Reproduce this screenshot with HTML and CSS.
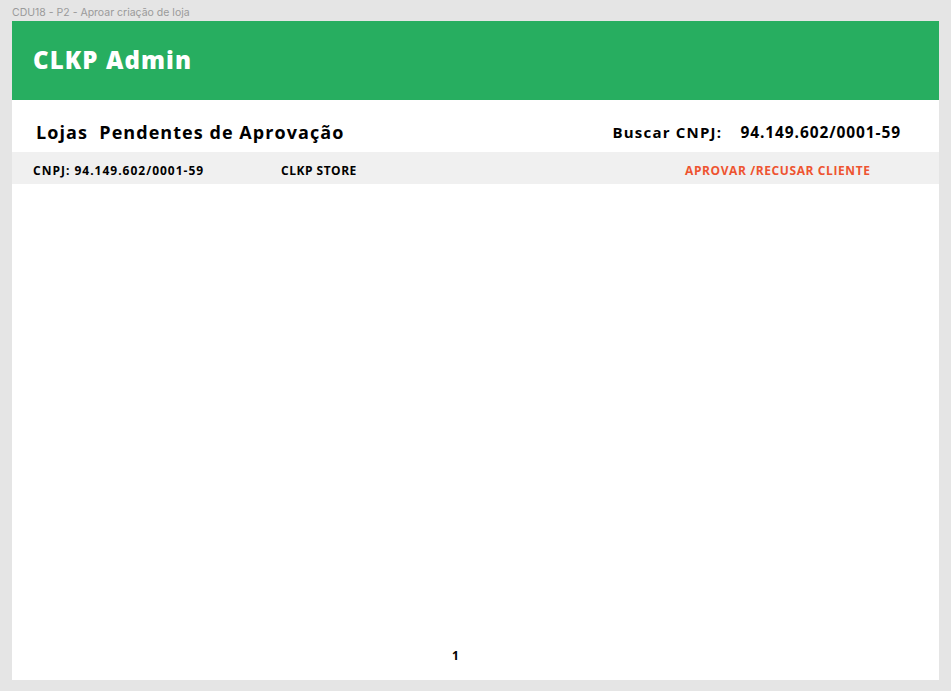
FILE: index.html
```html
<!DOCTYPE html>
<html lang="pt">
<head>
<meta charset="utf-8">
<link rel="stylesheet" href="styles.css">
</head>
<body>
<div class="label">CDU18 - P2 - Aproar criação de loja</div>
<div class="frame">
  <header class="topbar"><h1>CLKP Admin</h1></header>
  <div class="titlerow">
    <h2>Lojas&nbsp; Pendentes de Aprovação</h2>
    <div class="search"><span class="search-label">Buscar CNPJ:</span><span class="search-value">94.149.602/0001-59</span></div>
  </div>
  <div class="row">
    <span class="cnpj">CNPJ: 94.149.602/0001-59</span>
    <span class="name">CLKP STORE</span>
    <span class="action">APROVAR /RECUSAR CLIENTE</span>
  </div>
  <div class="spacer"></div>
  <div class="pager">1</div>
</div>
</body>
</html>
```
FILE: styles.css
```css
html, body { margin: 0; padding: 0; }
body {
  background: #e5e5e5;
  width: 951px;
  height: 691px;
  overflow: hidden;
  font-family: "Open Sans", sans-serif;
  color: #000;
}
.label {
  height: 21px;
  padding-left: 12px;
  font-family: Inter, sans-serif;
  font-size: 10.5px;
  line-height: 25px;
  color: #9a9a9a;
  box-sizing: border-box;
}
.frame {
  margin-left: 12px;
  width: 927px;
  height: 659px;
  background: #fff;
  display: flex;
  flex-direction: column;
}
.topbar {
  height: 79px;
  background: #27ae60;
  display: flex;
  align-items: center;
  padding-left: 21px;
}
.topbar h1 {
  margin: 0;
  color: #fff;
  font-size: 24px;
  font-weight: 800;
  letter-spacing: 1.1px;
  position: relative;
  top: -1px;
}
.titlerow {
  height: 52px;
  display: flex;
  align-items: center;
  padding: 12px 0 0 24px;
  box-sizing: border-box;
}
.titlerow h2 {
  margin: 0;
  font-size: 18px;
  font-weight: 700;
  letter-spacing: 1.05px;
  flex: 1;
}
.search {
  display: flex;
  align-items: center;
  font-weight: 700;
  margin-right: 38px;
}
.search-label { font-size: 15px; width: 128px; letter-spacing: 1.2px; }
.search-value { font-size: 15.5px; letter-spacing: 0.9px; }
.row {
  height: 32px;
  background: #f0f0f0;
  display: flex;
  align-items: center;
  padding: 4px 0 0 21px;
  box-sizing: border-box;
  font-size: 12px;
  font-weight: 700;
}
.cnpj { width: 248px; letter-spacing: 1px; }
.name { width: 404px; letter-spacing: 0.5px; }
.action { color: #ee5430; letter-spacing: 0.6px; }
.spacer { flex: 1; }
.pager {
  height: 50px;
  text-align: center;
  font-size: 12px;
  font-weight: 700;
  line-height: 52px;
  margin-left: -40px;
}
```
